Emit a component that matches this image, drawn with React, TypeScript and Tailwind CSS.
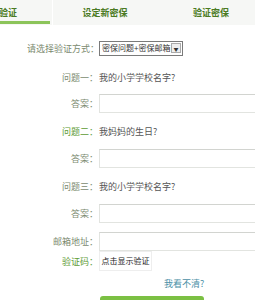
const font = { fontFamily: '"Noto Sans CJK SC", "Noto Sans", sans-serif' }

function Label({ children, green }: { children: React.ReactNode; green?: boolean }) {
  return (
    <div className={`w-[99px] shrink-0 text-right pr-[1px] ${green ? 'text-[#5d9b35]' : 'text-[#7b8a6f]'}`}>
      {children}
    </div>
  )
}

function Field({ label, green, mt }: { label: string; green?: boolean; mt: string }) {
  return (
    <div className={`flex items-center h-[19px] ${mt}`}>
      <Label green={green}>{label}</Label>
      <div className="h-[19px] w-[170px] shrink-0 border border-[#e2e4e0] border-t-[#d2d4d0] bg-white" />
    </div>
  )
}

function Question({ prefix, text, green, mt }: { prefix: string; text: string; green?: boolean; mt: string }) {
  return (
    <div className={`flex items-center h-[20px] ${mt}`}>
      <Label green={green}>{prefix}</Label>
      <span className="text-[#555]">{text}</span>
    </div>
  )
}

export default function App() {
  return (
    <div className="w-[255px] h-[300px] overflow-hidden bg-white text-[9px] leading-none whitespace-nowrap" style={font}>
      <div className="flex h-[25px] bg-[#f6f7f5] font-bold text-[#4a7a22]">
        <div className="relative w-[52px] flex items-center">
          <span className="-ml-[1px]">验证</span>
          <div className="absolute left-0 bottom-[1px] h-[3px] w-[50px] bg-[#8cc45a]" />
        </div>
        <div className="w-[1px] bg-white" />
        <div className="w-[104px] flex items-center justify-center">设定新密保</div>
        <div className="flex-1 flex items-center justify-center pl-[10px]">验证密保</div>
      </div>

      <div className="flex items-center h-[16px] mt-[15px]">
        <div className="w-[99px] shrink-0 text-right text-[#7b8a6f]">请选择验证方式：</div>
        <div className="flex items-center h-[15px] w-[84px] border border-[#7a7a7a] bg-white text-[8px] text-[#333] pl-[2px]">
          <span className="flex-1">密保问题+密保邮箱</span>
          <span className="flex items-center justify-center w-[10px] h-[10px] mr-[1px] border border-[#aaa] bg-[#eee] text-[5px]">▼</span>
        </div>
      </div>

      <Question prefix="问题一：" text="我的小学学校名字?" mt="mt-[11px]" />
      <Field label="答案：" mt="mt-[7px]" />
      <Question prefix="问题二：" text="我妈妈的生日?" green mt="mt-[8px]" />
      <Field label="答案：" mt="mt-[8px]" />
      <Question prefix="问题三：" text="我的小学学校名字?" mt="mt-[8px]" />
      <Field label="答案：" mt="mt-[8px]" />
      <Field label="邮箱地址：" mt="mt-[9px]" />

      <div className="flex items-center h-[20px]">
        <Label green>验证码：</Label>
        <div className="h-[20px] w-[53px] flex items-center justify-center bg-white border border-[#eee] text-[#222] text-[8px]">
          点击显示验证
        </div>
      </div>

      <div className="flex items-center h-[20px] mt-[2px]">
        <div className="w-[164px]" />
        <span className="text-[#4b8fa6]">我看不清?</span>
      </div>

      <div className="ml-[100px] mt-[3px] h-[10px] w-[104px] rounded-t-[3px] bg-[#7bc043]" />
    </div>
  )
}
